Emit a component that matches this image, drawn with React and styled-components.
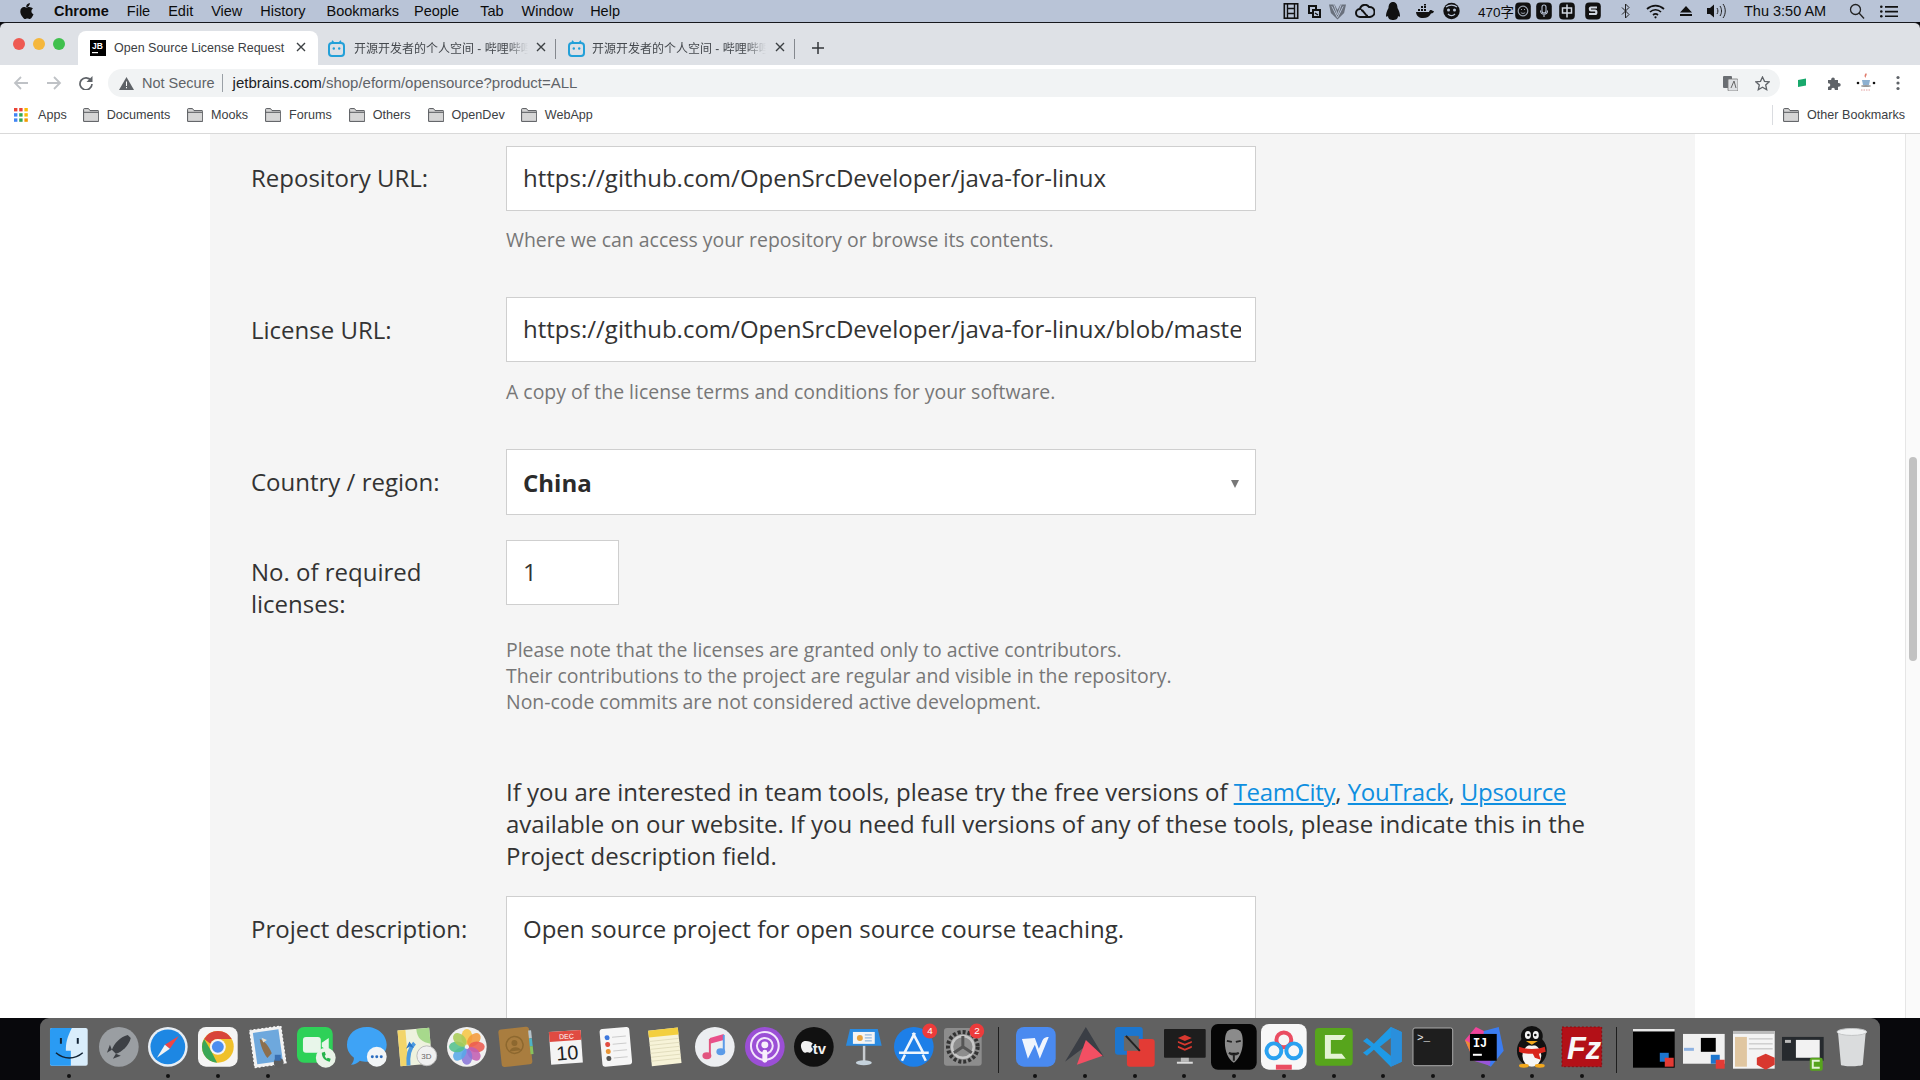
import styled, { createGlobalStyle } from "styled-components";

const GlobalStyle = createGlobalStyle`
  html, body {
    margin: 0;
    padding: 0;
    background: #08080c;
  }
  * {
    box-sizing: border-box;
  }
`;

const Screen = styled.div`
  width: 1920px;
  height: 1080px;
  display: flex;
  flex-direction: column;
  overflow: hidden;
  position: relative;
  background: #08080c;
`;

/* ---- macOS menu bar ---- */
const MenuBar = styled.div`
  height: 22px;
  flex: none;
  display: flex;
  align-items: center;
  background: #b9c4d7;
  color: #0c0c0c;
  font-family: "Liberation Sans", "Noto Sans CJK SC", Arial, sans-serif;
  font-size: 14.5px;
`;
const MenuItem = styled.span`
  flex: none;
  margin-left: ${(p) => p.$ml || 0}px;
  font-size: ${(p) => p.$size || 14.5}px;
  font-weight: ${(p) => (p.$bold ? 700 : 400)};
  white-space: nowrap;
`;
const Tray = styled.div`
  flex: none;
  height: 22px;
  width: ${(p) => p.$w}px;
  margin-left: ${(p) => p.$ml || 0}px;
  display: flex;
  align-items: center;
  justify-content: center;
`;

/* ---- browser chrome ---- */
const WindowTop = styled.div`
  flex: none;
  border-top: 1px solid #16181d;
  background: #dee1e6;
  border-radius: 6px 6px 0 0;
`;
const TabStrip = styled.div`
  height: 42px;
  display: flex;
  align-items: flex-end;
  padding-left: 9px;
  font-family: "Liberation Sans", "Noto Sans CJK SC", Arial, sans-serif;
  font-size: 12.5px;
`;
const Lights = styled.div`
  display: flex;
  gap: 8px;
  width: 69px;
  flex: none;
  align-self: center;
  margin-top: -1px;
  padding-left: 4px;
`;
const Light = styled.i`
  display: block;
  width: 12px;
  height: 12px;
  border-radius: 50%;
  background: ${(p) => p.$c};
`;
const Tab = styled.div`
  position: relative;
  height: 34px;
  width: ${(p) => p.$w}px;
  flex: none;
  display: flex;
  align-items: center;
  padding-left: ${(p) => p.$pl || 12}px;
  background: ${(p) => (p.$active ? "#fff" : "transparent")};
  border-radius: 8px 8px 0 0;
  color: ${(p) => (p.$active ? "#3c4043" : "#45494e")};
`;
const TabTitle = styled.span`
  margin-left: ${(p) => p.$ml || 8}px;
  width: ${(p) => p.$w}px;
  flex: none;
  white-space: nowrap;
  overflow: hidden;
  font-size: ${(p) => (p.$fade ? 12 : 12.5)}px;
  padding-bottom: ${(p) => (p.$fade ? 2 : 0)}px;
  -webkit-mask-image: ${(p) =>
    p.$fade ? "linear-gradient(to right, #000 88%, transparent)" : "none"};
`;
const TabClose = styled.span`
  position: absolute;
  right: ${(p) => p.$r}px;
  top: 11px;
  display: flex;
`;
const TabDivider = styled.span`
  position: absolute;
  right: 0;
  top: 8px;
  width: 1px;
  height: 20px;
  background: #84888e;
`;
const NewTab = styled.div`
  height: 34px;
  margin-left: 17px;
  display: flex;
  align-items: center;
`;

const Toolbar = styled.div`
  height: 36px;
  background: #fff;
  display: flex;
  align-items: center;
  font-family: "Liberation Sans", Arial, sans-serif;
  font-size: 14.5px;
`;
const NavButton = styled.div`
  width: ${(p) => p.$w}px;
  flex: none;
  display: flex;
  justify-content: center;
`;
const Omnibox = styled.div`
  width: 1672px;
  height: 28px;
  margin-left: 2px;
  flex: none;
  display: flex;
  align-items: center;
  border-radius: 14px;
  background: #f1f3f4;
  padding: 0 10px 0 11px;
`;
const NotSecure = styled.span`
  margin-left: 8px;
  color: #5f6368;
  white-space: nowrap;
`;
const UrlDivider = styled.span`
  width: 1px;
  height: 18px;
  background: #9aa0a6;
  margin: 0 10px 0 7px;
`;
const Url = styled.span`
  flex: 1;
  font-size: 15px;
  padding-bottom: 2px;
  color: #5f6368;
  white-space: nowrap;
  b {
    font-weight: 400;
    color: #202124;
  }
`;
const ActionButton = styled.span`
  display: flex;
  margin-left: ${(p) => p.$ml}px;
  flex: none;
`;

const BookmarkBar = styled.div`
  height: 33px;
  background: #fff;
  border-bottom: 1px solid #d9d9d9;
  display: flex;
  align-items: center;
  padding-left: 14px;
  padding-bottom: 5px;
  font-family: "Liberation Sans", Arial, sans-serif;
  font-size: 12.6px;
  color: #3c4043;
`;
const Bookmark = styled.span`
  display: flex;
  align-items: center;
  gap: ${(p) => p.$gap || 8}px;
  margin-right: ${(p) => p.$mr}px;
  white-space: nowrap;
`;
const BarRule = styled.span`
  width: 1px;
  height: 20px;
  margin: 0 10px 0 auto;
  background: #dadce0;
`;

/* ---- page ---- */
const Page = styled.div`
  flex: 1;
  min-height: 0;
  background: #fff;
  position: relative;
  overflow: hidden;
  padding-left: 210px;
`;
const ScrollTrack = styled.div`
  position: absolute;
  top: 0;
  bottom: 0;
  right: 0;
  width: 15px;
  background: #fafafa;
  border-left: 1px solid #e6e6e6;
`;
const ScrollThumb = styled.div`
  position: absolute;
  top: 323px;
  left: 3px;
  width: 8px;
  height: 204px;
  border-radius: 4px;
  background: #c2c2c2;
`;
const Panel = styled.div`
  width: 1485px;
  min-height: 100%;
  background: #f5f5f5;
  padding: 12px 0 0 41px;
  font-family: "Open Sans", sans-serif;
  color: #333;
`;
const Row = styled.div`
  display: flex;
  margin-top: ${(p) => p.$mt || 0}px;
  margin-bottom: ${(p) => p.$mb || 0}px;
`;
const Label = styled.div`
  width: 255px;
  flex: none;
  font-size: 24px;
  line-height: 32px;
  padding-top: ${(p) => p.$pt || 16}px;
  color: #333;
`;
const Field = styled.div`
  width: 750px;
`;
const TextInput = styled.input`
  display: block;
  width: ${(p) => p.$w || "100%"};
  height: 65px;
  padding: 0 14px 3px 16px;
  border: 1px solid #cfcfcf;
  border-radius: 0;
  background: #fff;
  outline: none;
  font-family: "Open Sans", sans-serif;
  font-size: 24px;
  color: #333;
`;
const Select = styled.div`
  height: 66px;
  display: flex;
  align-items: center;
  justify-content: space-between;
  padding: 0 16px;
  border: 1px solid #cfcfcf;
  background: #fff;
  font-size: 24px;
  font-weight: 700;
  color: #2b2b2b;
`;
const Caret = styled.span`
  width: 0;
  height: 0;
  margin-top: 4px;
  border-left: 4px solid transparent;
  border-right: 4px solid transparent;
  border-top: 8px solid #777;
`;
const Help = styled.div`
  margin-top: ${(p) => p.$mt}px;
  margin-left: ${(p) => p.$ml || 0}px;
  font-size: 19.45px;
  line-height: 26px;
  color: #777;
  white-space: nowrap;
`;
const Note = styled.p`
  margin: 61px 0 24px 255px;
  width: 1100px;
  font-size: 24px;
  line-height: 32px;
  color: #333;
  a {
    color: #0f8fe0;
    text-decoration: underline;
    letter-spacing: -0.3px;
  }
`;
const TextArea = styled.textarea`
  display: block;
  width: 750px;
  height: 200px;
  padding: 16px 16px;
  border: 1px solid #cfcfcf;
  background: #fff;
  outline: none;
  resize: none;
  font-family: "Open Sans", sans-serif;
  font-size: 24px;
  line-height: 32px;
  color: #333;
`;

/* ---- dock ---- */
const DockArea = styled.div`
  height: 62px;
  flex: none;
  background: #08080c;
  padding-left: 40px;
`;
const Dock = styled.div`
  width: 1840px;
  height: 62px;
  background: #616161;
  border-radius: 9px 9px 0 0;
  display: flex;
  align-items: flex-start;
  padding-left: 4px;
`;
const DockItem = styled.div`
  position: relative;
  width: 49.7px;
  height: 62px;
  flex: none;
  padding: ${(p) => (p.$big ? "6px 2px 0" : "8px 4px 0")};
  svg {
    display: block;
    width: 100%;
    overflow: visible;
  }
`;
const RunDot = styled.i`
  position: absolute;
  left: 50%;
  bottom: 2px;
  width: 4px;
  height: 4px;
  margin-left: -2px;
  border-radius: 50%;
  background: #111;
`;
const DockRule = styled.div`
  width: 1px;
  height: 46px;
  margin: 9px 12px 0 9.5px;
  flex: none;
  background: #1e1e1e;
`;

/* tray icons */
const Film = () => (
  <svg width="16" height="16" viewBox="0 0 15 16">
    <rect x=".8" y=".8" width="13.4" height="14.4" fill="#b9c4d7" stroke="#111" strokeWidth="1.6" />
    <path d="M4 1v14M11 1v14M4 5.500h7M4 10.500h7" stroke="#111" strokeWidth="1.4" />
  </svg>
);
const Screens = () => (
  <svg width="15" height="15" viewBox="0 0 15 15">
    <path d="M1 1h9v4h4v9H5v-4H1z" fill="#111" />
    <path d="M3 3h5v2H5v3H3zM7 7h5v5H7z" fill="#b9c4d7" />
    <path d="M8 9l3 2" stroke="#111" strokeWidth="1.4" />
  </svg>
);
const Vee = () => (
  <svg width="17" height="17" viewBox="0 0 18 17">
    <path d="M0 1h6l3 6 3-6h6l-2 9-7 7-7-7z" fill="#69707c" />
    <path d="M5 1l4 11 4-11M3 3l6 12 6-12" fill="none" stroke="#b9c4d7" strokeWidth="1" />
  </svg>
);
const Cloud = () => (
  <svg width="20" height="15" viewBox="0 0 20 15" fill="none" stroke="#111" strokeWidth="2">
    <path d="M5 13a4 4 0 0 1 0-8 5 5 0 0 1 9-2 5 5 0 0 1 1 10z" />
    <path d="M6 6c3 0 4 6 7 6" />
  </svg>
);
const Qq = ({ w = 14, h = 18 }) => (
  <svg width={w} height={h} viewBox="0 0 14 18">
    <path d="M7 0c3 0 4.500 2.600 4.500 6 1.500 3 2.500 5 2.500 8 0 1-1 1-2 0 0 2-1 3-2 3.500-2 .7-4 .7-6 0C3 17 2 16 2 14c-1 1-2 1-2 0 0-3 1-5 2.500-8C2.500 2.600 4 0 7 0z" fill="#111" />
  </svg>
);
const Whale = () => (
  <svg width="19" height="15" viewBox="0 0 19 15">
    <path d="M1 8h13c.5-2 2-2.500 3-1.500l2 .8c-.5 1.500-1.500 2.200-3 2.200-1.500 3-4 4.500-8 4.500-4 0-6.500-2-7-6z" fill="#111" />
    <path d="M3 5h2v2H3zM6 5h2v2H6zM9 5h2v2H9zM6 2h2v2H6zM9 2h2v2H9zM9 0h2v1.500H9z" fill="#111" />
  </svg>
);
const Mask = () => (
  <svg width="17" height="18" viewBox="0 0 17 18">
    <circle cx="8.500" cy="9" r="8.200" fill="#111" />
    <path d="M3 5c3-2.500 8-2.500 11 0" stroke="#b9c4d7" strokeWidth="1.300" fill="none" />
    <circle cx="5.500" cy="8" r="1.500" fill="#b9c4d7" />
    <circle cx="11.500" cy="8" r="1.500" fill="#b9c4d7" />
    <path d="M5 12c2 2 5 2 7 0" stroke="#b9c4d7" strokeWidth="1.300" fill="none" />
  </svg>
);
const BlackKey = ({ children }) => (
  <svg width="16" height="18" viewBox="0 0 16 18">
    <rect x=".2" y=".5" width="15.600" height="17" rx="4" fill="#111" />
    {children}
  </svg>
);
const SmileKey = () => (
  <BlackKey>
    <circle cx="8" cy="9" r="4.800" fill="none" stroke="#9aa3b0" strokeWidth="1.200" />
    <path d="M5.800 10.500c1.200 1.200 3.200 1.200 4.400 0M6 7.500h1M9 7.500h1" stroke="#9aa3b0" strokeWidth="1" fill="none" />
  </BlackKey>
);
const MicKey = () => (
  <BlackKey>
    <rect x="6" y="3" width="4" height="8" rx="2" fill="none" stroke="#b9c4d7" strokeWidth="1.100" />
    <path d="M4.500 8.500c0 5 7 5 7 0M8 13v2" stroke="#b9c4d7" strokeWidth="1.100" fill="none" />
  </BlackKey>
);
const HanKey = () => (
  <BlackKey>
    <path d="M3.500 6h9v5h-9zM8 2.500v13" fill="none" stroke="#d0d6e0" strokeWidth="1.500" />
  </BlackKey>
);
const SogouKey = () => (
  <BlackKey>
    <path d="M12 5.500H6c-1.500 0-1.500 3 0 3h4c1.800 0 1.800 3.500 0 3.500H4" fill="none" stroke="#d0d6e0" strokeWidth="2.200" />
  </BlackKey>
);
const Bluetooth = () => (
  <svg width="9" height="16" viewBox="0 0 9 16" fill="none" stroke="#222" strokeWidth="1">
    <path d="M1 4.500l7 7L4.500 15V1L8 4.500l-7 7" />
  </svg>
);
const Wifi = () => (
  <svg width="19" height="15" viewBox="0 0 19 15" fill="none" stroke="#111" strokeWidth="1.700">
    <path d="M1 5c5-4.500 12-4.500 17 0M4 8c3-3 8-3 11 0M7 11c1.500-1.300 3.500-1.300 5 0" />
    <circle cx="9.500" cy="13.300" r="1.100" fill="#111" stroke="none" />
  </svg>
);
const Eject = () => (
  <svg width="12" height="10" viewBox="0 0 12 10">
    <path d="M6 0l6 6.500H0zM0 8h12v2H0z" fill="#111" />
  </svg>
);
const Volume = () => (
  <svg width="21" height="16" viewBox="0 0 21 16" fill="none" stroke="#222" strokeWidth="1">
    <path d="M1 5h3l4-3.500v13L4 11H1z" fill="#111" stroke="none" />
    <path d="M11 5c1.200 2 1.200 4 0 6M14 3c2 3 2 7 0 10M17 1c3 4 3 10 0 14" />
  </svg>
);
const Search = () => (
  <svg width="16" height="16" viewBox="0 0 16 16" fill="none" stroke="#222" strokeWidth="1.300">
    <circle cx="6.500" cy="6.500" r="5" />
    <path d="M10 10l5 5.500" />
  </svg>
);
const ListIcon = () => (
  <svg width="18" height="13" viewBox="0 0 18 13" fill="#111">
    <path d="M5 1h13v1.700H5zM5 5.700h13v1.700H5zM5 10.400h13v1.700H5z" />
    <circle cx="1.300" cy="1.800" r="1.300" />
    <circle cx="1.300" cy="6.500" r="1.300" />
    <circle cx="1.300" cy="11.200" r="1.300" />
  </svg>
);
const Apple = () => (
  <svg width="14" height="16" viewBox="0 0 14 16" fill="#111">
    <path d="M9.800 0c.1 1.200-.3 2.200-1 3-.7.800-1.700 1.300-2.600 1.200-.1-1.100.4-2.200 1-2.900C7.900.6 9 .1 9.800 0zM13 5.500c-1 .7-1.600 1.600-1.600 2.800 0 1.400.8 2.400 2.100 3-.4 1.100-.9 2.100-1.600 3-.6.900-1.300 1.700-2.200 1.700-.9 0-1.200-.5-2.300-.5s-1.500.5-2.300.5c-.9 0-1.600-.9-2.300-1.800C1 12.300.3 10.400.3 8.600c0-2.900 1.900-4.500 3.700-4.500 1 0 1.800.6 2.400.6.600 0 1.500-.7 2.700-.7 1.700 0 3.100.9 3.900 1.500z" />
  </svg>
);

/* browser icons */
const JbFavicon = () => (
  <svg width="16" height="16" viewBox="0 0 16 16" style={{ flex: "none" }}>
    <rect width="16" height="16" fill="#000" />
    <text x="2" y="9" fill="#fff" fontSize="8.500" fontWeight="700" fontFamily="Liberation Sans">JB</text>
    <rect x="2" y="12" width="6" height="1.200" fill="#fff" />
  </svg>
);
const BiliFavicon = () => (
  <svg width="17" height="17" viewBox="0 0 17 17" style={{ flex: "none" }}>
    <path d="M4 .8l2.200 2.500M13 .8l-2.200 2.500" stroke="#23a0d8" strokeWidth="1.500" />
    <rect x="1" y="3" width="15" height="13" rx="3" fill="none" stroke="#23a0d8" strokeWidth="2" />
    <circle cx="5.800" cy="8.500" r="1.200" fill="#23a0d8" />
    <circle cx="11.200" cy="8.500" r="1.200" fill="#23a0d8" />
  </svg>
);
const CloseX = () => (
  <svg width="10" height="10" viewBox="0 0 10 10" stroke="#3c4043" strokeWidth="1.400">
    <path d="M1 1l8 8M9 1l-8 8" />
  </svg>
);
const Plus = () => (
  <svg width="12" height="12" viewBox="0 0 12 12" stroke="#33363a" strokeWidth="1.500">
    <path d="M6 0v12M0 6h12" />
  </svg>
);
const ArrowIcon = ({ dir }) => (
  <svg width="16" height="14" viewBox="0 0 16 14" fill="none" stroke="#bfc2c6" strokeWidth="1.800">
    <path d={dir === "left" ? "M15 7H2M8 1L2 7l6 6" : "M1 7h13M8 1l6 6-6 6"} />
  </svg>
);
const Reload = () => (
  <svg width="14" height="14" viewBox="0 0 14 14" fill="none">
    <path d="M12 4.500A6 6 0 1 0 13 8" stroke="#5f6368" strokeWidth="1.700" />
    <path d="M13.500 0v6h-6z" fill="#5f6368" />
  </svg>
);
const Warn = () => (
  <svg width="15" height="13" viewBox="0 0 15 13" style={{ flex: "none" }}>
    <path d="M7.500 0L15 13H0z" fill="#5f6368" />
    <path d="M7 4.500h1v4.500H7zM7 10h1v1.300H7z" fill="#fff" />
  </svg>
);
const Translate = () => (
  <svg width="15" height="15" viewBox="0 0 15 15">
    <rect x="0" y="0" width="9" height="12" rx="1" fill="#6a6e73" />
    <rect x="5" y="3" width="10" height="12" rx="1" fill="#dfe1e4" stroke="#777" strokeWidth=".8" />
    <path d="M8 12l3-7 2 7" stroke="#666" fill="none" />
  </svg>
);
const Star = () => (
  <svg width="15" height="15" viewBox="0 0 15 15" fill="none" stroke="#5f6368" strokeWidth="1.300">
    <path d="M7.500 1l2 4.300 4.700.5-3.500 3.200 1 4.700-4.200-2.400L3.300 13.700l1-4.700L.8 5.800l4.700-.5z" />
  </svg>
);
const GreenTag = () => (
  <svg width="10" height="10" viewBox="0 0 10 10">
    <path d="M1 2l8-1.500v7L1 9z" fill="#18a96c" />
  </svg>
);
const Puzzle = () => (
  <svg width="15" height="15" viewBox="0 0 15 15" fill="#5f6368">
    <path d="M1 4h3.200c-.6-3 4-3.500 3.600 0H11v3c3.600-.5 3.600 4.200 0 3.700V14H7.800c.4-3-3.800-3-3.400 0H1v-3.300c3 .5 3-4 0-3.400z" />
  </svg>
);
const Avatar = () => (
  <svg width="22" height="22" viewBox="0 0 22 22">
    <path d="M11 1c2 2-1 3 0 5-2-1-2-3 0-5z" fill="#e07a6a" />
    <path d="M7 8h8l-1 5H8z" fill="#8db0d0" />
    <ellipse cx="11" cy="14" rx="5" ry="1" fill="#999" />
    <circle cx="3" cy="11" r="1.300" fill="#111" />
    <circle cx="19" cy="11" r="1.300" fill="#111" />
    <path d="M6 18h10" stroke="#e2a0a0" strokeWidth="1" strokeDasharray="1.500 1" />
  </svg>
);
const Dots = () => (
  <svg width="4" height="16" viewBox="0 0 4 16" fill="#5f6368">
    <circle cx="2" cy="2.500" r="1.600" />
    <circle cx="2" cy="8" r="1.600" />
    <circle cx="2" cy="13.500" r="1.600" />
  </svg>
);
const AppsGrid = () => (
  <svg width="14" height="14" viewBox="0 0 14 14">
    {["#ea4335", "#ea4335", "#fbbc04", "#4285f4", "#34a853", "#fbbc04", "#4285f4", "#34a853", "#f29900"].map((c, i) => (
      <rect key={i} x={(i % 3) * 5.2} y={Math.floor(i / 3) * 5.2} width="3.4" height="3.4" fill={c} />
    ))}
  </svg>
);
const Folder = () => (
  <svg width="16" height="14" viewBox="0 0 16 14" style={{ flex: "none" }}>
    <path d="M.6 13.400V1.300c0-.4.300-.7.700-.7h4.200l1.500 2h8c.4 0 .7.300.7.700v10.100z" fill="#d6d6d6" stroke="#55585c" strokeWidth="1" />
    <path d="M.6 4.300h14.800" stroke="#55585c" strokeWidth="1" />
  </svg>
);

/* dock icons, all in a 42 x 42 box */
const dockIcons = {
  finder: (
    <>
      <rect x="2" y="2" width="38" height="38" rx="2" fill="#d9edfb" />
      <path d="M2 4a2 2 0 0 1 2-2h20c-5 10-6 15-6 23h5v15H4a2 2 0 0 1-2-2z" fill="#2a9bf3" />
      <path d="M13 12v6M30 12v6" stroke="#123" strokeWidth="2" />
      <path d="M8 27c8 7 19 7 27 0" stroke="#123" strokeWidth="1.500" fill="none" />
    </>
  ),
  launchpad: (
    <>
      <circle cx="21" cy="21" r="20" fill="#9a9ea2" />
      <path d="M30 9c-8 2-14 9-16 15l4 4c6-2 13-8 15-16z" fill="#3d4045" />
      <path d="M14 24l-5 3 3-8zM18 28l-3 5 8-3zM12 30l-3 3" fill="#3d4045" />
    </>
  ),
  safari: (
    <>
      <circle cx="21" cy="21" r="20" fill="#e8eef4" />
      <circle cx="21" cy="21" r="17.500" fill="#1d87e3" />
      <path d="M32 10L18 19l5 4z" fill="#ef4545" />
      <path d="M10 32l8-13 5 4z" fill="#f3f3f3" />
    </>
  ),
  chrome: (
    <>
      <rect x="1" y="1" width="40" height="40" rx="8" fill="#f5f5f5" />
      <circle cx="21" cy="21" r="16" fill="#f0c12c" />
      <path d="M21 5a16 16 0 0 1 14 8H21a8 8 0 0 0-7.500 5L7.200 13A16 16 0 0 1 21 5z" fill="#d8453b" />
      <path d="M7.200 13l7 12 6 12A16 16 0 0 1 7.200 13z" fill="#3aa757" />
      <circle cx="21" cy="21" r="8" fill="#f5f5f5" />
      <circle cx="21" cy="21" r="6" fill="#4c8ef0" />
    </>
  ),
  mail: (
    <>
      <g transform="rotate(-8 21 21)">
        <rect x="5" y="2" width="32" height="38" fill="#f2f2f2" strokeDasharray="2 2" stroke="#fff" />
        <rect x="8" y="5" width="26" height="32" fill="#6ea8dd" />
        <path d="M14 12c4 2 8 8 10 16l-5 4c-3-5-5-12-5-20z" fill="#8c6f4d" />
        <path d="M16 11l5 3-4 2z" fill="#e9dfcc" />
      </g>
      <circle cx="32" cy="37" r="5" fill="#5e5e5e" />
      <rect x="28" y="29" width="6" height="6" fill="#3a6fb0" />
    </>
  ),
  facetime: (
    <>
      <rect x="1" y="1" width="36" height="36" rx="7" fill="#2ed158" />
      <rect x="7" y="11" width="18" height="16" rx="3" fill="#e8f6ea" />
      <path d="M26 17l7-5v14l-7-5z" fill="#e8f6ea" />
      <circle cx="30" cy="32" r="10" fill="#e9f3e8" />
      <path d="M26 27c0 5 3 8 8 9l1-3-3-1-1 1c-1-1-2-2-2-3l1-1-1-3z" fill="#25b34b" />
    </>
  ),
  messages: (
    <>
      <path d="M21 1C10 1 1 8 1 19c0 6 3 10 7 13 0 3-1 5-3 7 4 0 7-2 9-4 2 1 5 1 7 1 11 0 20-7 20-17S32 1 21 1z" fill="#3ea3f6" />
      <circle cx="31" cy="31" r="10" fill="#f2f5f7" />
      <circle cx="26.500" cy="31" r="1.500" fill="#2a6cc0" />
      <circle cx="31" cy="31" r="1.500" fill="#2a6cc0" />
      <circle cx="35.500" cy="31" r="1.500" fill="#2a6cc0" />
    </>
  ),
  maps: (
    <>
      <g transform="rotate(-5 21 21)">
        <rect x="3" y="3" width="32" height="36" fill="#eef2de" />
        <path d="M3 3h8v36H3z" fill="#f2d56a" />
        <path d="M22 3c0 10 5 14 13 16V3z" fill="#a7d98c" />
        <path d="M11 39c0-12 3-18 8-22" stroke="#4a9ae0" strokeWidth="4" fill="none" />
        <path d="M10 22l4-7 4 7-4-2z" fill="#2a76c8" />
      </g>
      <circle cx="31" cy="30" r="10" fill="#f0f0f0" stroke="#bbb" />
      <text x="25.500" y="33" fontSize="8" fontFamily="Liberation Sans" fill="#666">3D</text>
    </>
  ),
  photos: (
    <>
      <circle cx="21" cy="21" r="20" fill="#f0f0f0" />
      {["#f6c644", "#f29a3b", "#ec5b50", "#c25fb2", "#8a76d8", "#58a8e8", "#53c08c", "#a8cc57"].map((c, i) => (
        <ellipse key={c} cx="21" cy="11" rx="5.500" ry="8" fill={c} opacity=".88" transform={`rotate(${i * 45} 21 21)`} />
      ))}
    </>
  ),
  contacts: (
    <>
      <g transform="rotate(-6 21 21)">
        <rect x="5" y="2" width="31" height="38" rx="3" fill="#a97d3f" />
        <rect x="35" y="6" width="3" height="8" fill="#b7c4cb" />
        <rect x="35" y="14" width="3" height="8" fill="#4eb2c7" />
        <rect x="35" y="22" width="3" height="8" fill="#87c25c" />
        <circle cx="20" cy="19" r="8.500" fill="none" stroke="#8d682f" strokeWidth="1.500" />
        <circle cx="20" cy="17" r="3" fill="#8d682f" />
        <path d="M14 25c2-5 10-5 12 0z" fill="#8d682f" />
      </g>
    </>
  ),
  calendar: (
    <>
      <g transform="rotate(-4 21 21)">
        <rect x="5" y="5" width="32" height="33" fill="#f4f4f4" />
        <rect x="5" y="5" width="32" height="10" fill="#e04b42" />
        <text x="15" y="13" fontSize="7" fill="#fff" fontFamily="Liberation Sans">DEC</text>
        <text x="11" y="34" fontSize="20" fill="#222" fontFamily="Liberation Sans">10</text>
      </g>
    </>
  ),
  reminders: (
    <>
      <g transform="rotate(-5 21 21)">
        <rect x="6" y="2" width="30" height="38" rx="3" fill="#f6f6f6" />
        <circle cx="13" cy="11" r="2.500" fill="#3d78dd" />
        <circle cx="13" cy="18" r="2.500" fill="#e24d42" />
        <circle cx="13" cy="25" r="2.500" fill="#ea9635" />
        <circle cx="13" cy="32" r="2.500" fill="#555" />
        <path d="M18 11h14M18 18h14M18 25h14M18 32h14" stroke="#ccc" />
      </g>
    </>
  ),
  notes: (
    <>
      <g transform="rotate(-6 21 21)">
        <rect x="6" y="3" width="30" height="36" fill="#f7f3d8" />
        <rect x="6" y="3" width="30" height="7" fill="#f3cf3e" />
        <path d="M6 14h30M6 18h30M6 22h30M6 26h30M6 30h30M6 34h30" stroke="#ddd8b8" strokeWidth=".8" />
      </g>
    </>
  ),
  music: (
    <>
      <circle cx="21" cy="21" r="20" fill="#eceef1" />
      <path d="M16 12l14-4v6l-14 4z" fill="#e94f8a" />
      <path d="M16 13v17" stroke="#e2557f" strokeWidth="2" />
      <path d="M30 9v16" stroke="#5b9be8" strokeWidth="2" />
      <ellipse cx="13" cy="30" rx="4.500" ry="3.500" fill="#e2557f" />
      <ellipse cx="27" cy="26" rx="4.500" ry="3.500" fill="#5b9be8" />
    </>
  ),
  podcasts: (
    <>
      <circle cx="21" cy="21" r="20" fill="#9b4fd6" />
      <circle cx="21" cy="20" r="14" fill="none" stroke="#f3e6fb" strokeWidth="2" />
      <circle cx="21" cy="20" r="8" fill="none" stroke="#f3e6fb" strokeWidth="2" />
      <circle cx="21" cy="19" r="3.500" fill="#f8f0fc" />
      <rect x="18.500" y="24" width="5" height="13" rx="2.500" fill="#f8f0fc" />
    </>
  ),
  tv: (
    <>
      <circle cx="21" cy="21" r="20" fill="#111" />
      <path d="M13 15c-3 0-5 2-5 5s2 7 4 7c1 0 1.500-.5 2.500-.5S16 27 17 27c1.500 0 3-3 3-4-2-1-2-4 0-5-1-2-4-3-7-3z" fill="#f1f1f1" />
      <text x="20" y="28" fontSize="15" fontWeight="700" fill="#f1f1f1" fontFamily="Liberation Sans">tv</text>
    </>
  ),
  keynote: (
    <>
      <path d="M7 3h28l4 17H3z" fill="#2a8ae0" />
      <rect x="10" y="6" width="22" height="12" fill="#f4f4f4" />
      <circle cx="17" cy="12" r="3" fill="#e8a23c" />
      <path d="M22 9h7M22 12h7M22 15h7" stroke="#7aa8d8" />
      <rect x="20" y="20" width="2.500" height="16" fill="#c8ccd0" />
      <ellipse cx="21" cy="37" rx="8" ry="2.500" fill="#c5d2dc" />
    </>
  ),
  appstore: (
    <>
      <circle cx="21" cy="21" r="20" fill="#1d7fe8" />
      <path d="M22 7L11 28M20 7l11 21M6 27h30M9 35l3-6M33 35l-3-6" stroke="#eef5fc" strokeWidth="2.600" fill="none" />
      <circle cx="37" cy="5" r="7.500" fill="#ed3b3b" />
      <text x="34.500" y="8.500" fontSize="10" fill="#fff" fontFamily="Liberation Sans">4</text>
    </>
  ),
  settings: (
    <>
      <rect x="2" y="2" width="38" height="38" rx="3" fill="#8d8d8d" />
      <circle cx="21" cy="21" r="15" fill="none" stroke="#333" strokeWidth="4" strokeDasharray="3 2" />
      <circle cx="21" cy="21" r="11" fill="none" stroke="#c8c8c8" strokeWidth="2.500" />
      <path d="M21 21V10M21 21l-9 6M21 21l9 6" stroke="#555" strokeWidth="3" />
      <circle cx="35" cy="5" r="7.500" fill="#ed3b3b" />
      <text x="32.500" y="8.500" fontSize="10" fill="#fff" fontFamily="Liberation Sans">2</text>
    </>
  ),
  wps: (
    <>
      <rect x="1" y="1" width="40" height="40" rx="8" fill="#4a8af0" />
      <path d="M7 13l6 20 7-14 5 14 9-22c-4 0-6 2-7 5l-3 7-4-11z" fill="#f0f5fd" />
    </>
  ),
  artifact: (
    <>
      <path d="M22 1l18 30-19-10L1 36z" fill="#3a3e45" />
      <path d="M22 14l17 16-26 9z" fill="#f34f63" />
    </>
  ),
  vmware: (
    <>
      <rect x="1" y="1" width="28" height="28" rx="3" fill="#1c76cf" />
      <rect x="13" y="13" width="28" height="28" rx="3" fill="#e33b35" />
      <rect x="10" y="10" width="15" height="15" fill="#686868" />
      <path d="M12 10l14 15" stroke="#222" strokeWidth="2" />
    </>
  ),
  redis: (
    <>
      <rect x="0" y="3" width="42" height="29" rx="1" fill="#1d1d1d" />
      <rect x="17" y="32" width="8" height="4" fill="#b9b9b9" />
      <rect x="13" y="36" width="16" height="2" fill="#ddd" />
      <path d="M21 9l7 3-7 3-7-3zM14 15l7 3 7-3v2l-7 3-7-3zM14 20l7 3 7-3v2l-7 3-7-3z" fill="#d8382f" />
    </>
  ),
  anon: (
    <>
      <rect x="0" y="0" width="46" height="46" rx="7" fill="#050505" />
      <path d="M23 5c-8 0-9 6-9 14 0 8 3 17 9 20 5-3 9-12 9-20 0-8-1-14-9-14z" fill="#8b8b8b" />
      <path d="M16 17l5 1M25 18l5-1M18 29c3 2 7 2 10 0M23 31v6" stroke="#222" strokeWidth="2" />
    </>
  ),
  baidu: (
    <>
      <rect x="0" y="0" width="46" height="46" rx="8" fill="#f7f7f7" />
      <circle cx="23" cy="16" r="7.500" fill="none" stroke="#ea4d62" strokeWidth="4" />
      <circle cx="13" cy="27" r="7.500" fill="none" stroke="#2aa1f0" strokeWidth="4" />
      <circle cx="33" cy="27" r="7.500" fill="none" stroke="#2aa1f0" strokeWidth="4" />
      <rect x="15" y="41" width="16" height="5" fill="#ea4d62" />
    </>
  ),
  camtasia: (
    <>
      <rect x="2" y="2" width="38" height="38" rx="4" fill="#57a51c" />
      <path d="M33 9H12v24h21l-4-5H18V14h11z" fill="#e4f3d4" />
    </>
  ),
  vscode: (
    <>
      <path d="M29 1l11 5v30l-11 5L12 24l-7 6-4-3 8-6-8-6 4-3 7 6z" fill="#1e9ae6" />
      <path d="M29 1l11 5v30l-11 5z" fill="#2a8fdc" />
      <path d="M29 12L18 21l11 9z" fill="#61656a" />
    </>
  ),
  terminal: (
    <>
      <rect x="1" y="2" width="40" height="38" rx="2" fill="#1e1e1e" stroke="#aaa" />
      <text x="5" y="15" fontSize="11" fill="#eee" fontFamily="Liberation Mono">&gt;_</text>
    </>
  ),
  idea: (
    <>
      <path d="M3 14L14 1l12 6-3 30-11-2z" fill="#f0449a" />
      <path d="M22 5L37 1l5 24-13 16-10-6z" fill="#3b7cf0" />
      <path d="M3 14l9 21 6-12z" fill="#ef8c36" />
      <path d="M12 35l16 5 3-18z" fill="#9a56d8" />
      <rect x="8" y="8" width="27" height="27" fill="#000" />
      <text x="11" y="21" fontSize="12" fontWeight="700" fill="#fff" fontFamily="Liberation Mono">IJ</text>
      <rect x="11" y="28" width="9" height="2" fill="#fff" />
    </>
  ),
  qq: (
    <>
      <ellipse cx="21" cy="25" rx="15" ry="16" fill="#111" />
      <ellipse cx="21" cy="30" rx="9.500" ry="11" fill="#f5f5f5" />
      <ellipse cx="21" cy="10" rx="11" ry="10" fill="#111" />
      <ellipse cx="17" cy="9" rx="3" ry="4" fill="#f5f5f5" />
      <ellipse cx="25" cy="9" rx="3" ry="4" fill="#f5f5f5" />
      <circle cx="17.500" cy="9" r="1.300" fill="#111" />
      <circle cx="24.500" cy="9" r="1.300" fill="#111" />
      <path d="M15 15h12l-6 4z" fill="#f2a81d" />
      <path d="M8 21c8 3 18 3 26 0l1 5-7 2 2 6-6-2-2-4c-5 0-10 0-14-2z" fill="#d9261c" />
      <ellipse cx="13" cy="40" rx="5" ry="2" fill="#f2a81d" />
      <ellipse cx="29" cy="40" rx="5" ry="2" fill="#f2a81d" />
    </>
  ),
  filezilla: (
    <>
      <rect x="1" y="1" width="40" height="40" fill="#b31017" strokeDasharray="2 2" stroke="#8a0c10" />
      <text x="6" y="33" fontSize="31" fontWeight="700" fontStyle="italic" fill="#f7f7f7" fontFamily="Liberation Sans">Fz</text>
    </>
  ),
  win1: (
    <>
      <rect x="0" y="3" width="42" height="39" fill="#000" />
      <rect x="0" y="3" width="42" height="2.500" fill="#e8e8e8" />
      <rect x="27" y="27" width="9" height="9" fill="#1c76cf" />
      <rect x="32" y="32" width="9" height="9" fill="#e33b35" />
    </>
  ),
  win2: (
    <>
      <rect x="0" y="8" width="42" height="30" fill="#f1f1f1" />
      <rect x="18" y="12" width="15" height="14" fill="#000" />
      <rect x="1" y="22" width="10" height="3" fill="#8eb2e2" />
      <rect x="28" y="29" width="9" height="9" fill="#1c76cf" />
      <rect x="33" y="34" width="9" height="9" fill="#e33b35" />
    </>
  ),
  win3: (
    <>
      <rect x="0" y="5" width="42" height="38" fill="#f4f4f4" />
      <rect x="0" y="5" width="42" height="3" fill="#bbb" />
      <rect x="2" y="11" width="12" height="30" fill="#e0c6a0" />
      <path d="M16 13h24M16 18h24M16 23h24" stroke="#bbb" />
      <path d="M33 28l9 4v7l-9 5-9-5v-7z" fill="#d8382f" />
    </>
  ),
  win4: (
    <>
      <rect x="0" y="11" width="42" height="24" fill="#262a2e" />
      <rect x="14" y="14" width="24" height="18" fill="#f2f2f2" />
      <rect x="3" y="14" width="6" height="3" fill="#bbb" />
      <rect x="28" y="32" width="13" height="13" rx="2" fill="#57a51c" />
      <path d="M38 35h-7v7h7" stroke="#e4f3d4" strokeWidth="2" fill="none" />
    </>
  ),
  trash: (
    <>
      <path d="M6 6l3 33c0 2 20 2 22 0l3-33z" fill="#dadcdd" />
      <ellipse cx="20" cy="6" rx="15" ry="3.500" fill="#eef0f1" stroke="#c2c4c5" />
    </>
  ),
};

const DockIcon = ({ name, run, big }) => (
  <DockItem $big={big}>
    <svg viewBox={big ? "0 0 46 46" : "0 0 42 42"}>{dockIcons[name]}</svg>
    {run && <RunDot />}
  </DockItem>
);

const Apps = [
  ["finder", 1], ["launchpad"], ["safari", 1], ["chrome", 1], ["mail", 1], ["facetime"], ["messages"],
  ["maps"], ["photos"], ["contacts"], ["calendar"], ["reminders"], ["notes"], ["music"], ["podcasts"],
  ["tv"], ["keynote"], ["appstore"], ["settings"],
];
const OpenApps = [
  ["wps", 1], ["artifact", 1], ["vmware", 1], ["redis", 1], ["anon", 1, 1], ["baidu", 1, 1], ["camtasia", 1],
  ["vscode", 1], ["terminal", 1], ["idea", 1], ["qq", 1], ["filezilla", 1],
];
const Minimized = ["win1", "win2", "win3", "win4", "trash"];

const App = () => {
  return (
    <Screen>
      <GlobalStyle />
      <MenuBar>
        <Tray $w={14} $ml={20}><Apple /></Tray>
        <MenuItem $ml={20} $bold>Chrome</MenuItem>
        <MenuItem $ml={18}>File</MenuItem>
        <MenuItem $ml={18}>Edit</MenuItem>
        <MenuItem $ml={18}>View</MenuItem>
        <MenuItem $ml={18}>History</MenuItem>
        <MenuItem $ml={21}>Bookmarks</MenuItem>
        <MenuItem $ml={15}>People</MenuItem>
        <MenuItem $ml={21}>Tab</MenuItem>
        <MenuItem $ml={18}>Window</MenuItem>
        <MenuItem $ml={17}>Help</MenuItem>
        <Tray $w={16} $ml={663}><Film /></Tray>
        <Tray $w={16} $ml={8}><Screens /></Tray>
        <Tray $w={18} $ml={6}><Vee /></Tray>
        <Tray $w={20} $ml={8}><Cloud /></Tray>
        <Tray $w={14} $ml={11}><Qq /></Tray>
        <Tray $w={19} $ml={15.5}><Whale /></Tray>
        <Tray $w={17} $ml={9}><Mask /></Tray>
        <MenuItem $ml={17.5} $size={13.5}>470字</MenuItem>
        <Tray $w={16} $ml={1}><SmileKey /></Tray>
        <Tray $w={16} $ml={5.5}><MicKey /></Tray>
        <Tray $w={16} $ml={6.5}><HanKey /></Tray>
        <Tray $w={16} $ml={10}><SogouKey /></Tray>
        <Tray $w={9} $ml={20.5}><Bluetooth /></Tray>
        <Tray $w={19} $ml={16}><Wifi /></Tray>
        <Tray $w={12} $ml={14.5}><Eject /></Tray>
        <Tray $w={21} $ml={14.5}><Volume /></Tray>
        <MenuItem $ml={16.5}>Thu 3:50 AM</MenuItem>
        <Tray $w={16} $ml={23}><Search /></Tray>
        <Tray $w={18} $ml={15}><ListIcon /></Tray>
      </MenuBar>

      <WindowTop>
        <TabStrip>
          <Lights>
            <Light $c="#ee5a52" />
            <Light $c="#f5b73c" />
            <Light $c="#3fc04d" />
          </Lights>
          <Tab $active $w={240}>
            <JbFavicon />
            <TabTitle $w={175}>Open Source License Request</TabTitle>
            <TabClose $r={12}><CloseX /></TabClose>
          </Tab>
          <Tab $w={238} $pl={10}>
            <BiliFavicon />
            <TabTitle $w={174} $ml={9} $fade>开源开发者的个人空间 - 哔哩哔哩</TabTitle>
            <TabClose $r={10}><CloseX /></TabClose>
            <TabDivider />
          </Tab>
          <Tab $w={239}>
            <BiliFavicon />
            <TabTitle $w={174} $ml={7} $fade>开源开发者的个人空间 - 哔哩哔哩</TabTitle>
            <TabClose $r={10}><CloseX /></TabClose>
            <TabDivider />
          </Tab>
          <NewTab><Plus /></NewTab>
        </TabStrip>
        <Toolbar>
          <NavButton $w={42}><ArrowIcon dir="left" /></NavButton>
          <NavButton $w={24}><ArrowIcon dir="right" /></NavButton>
          <NavButton $w={40}><Reload /></NavButton>
          <Omnibox>
            <Warn />
            <NotSecure>Not Secure</NotSecure>
            <UrlDivider />
            <Url><b>jetbrains.com</b>/shop/eform/opensource?product=ALL</Url>
            <ActionButton $ml={0}><Translate /></ActionButton>
            <ActionButton $ml={17.5}><Star /></ActionButton>
          </Omnibox>
          <ActionButton $ml={17}><GreenTag /></ActionButton>
          <ActionButton $ml={19.5}><Puzzle /></ActionButton>
          <ActionButton $ml={13.5}><Avatar /></ActionButton>
          <ActionButton $ml={19}><Dots /></ActionButton>
        </Toolbar>
        <BookmarkBar>
          <Bookmark $mr={16} $gap={10}><AppsGrid />Apps</Bookmark>
          <Bookmark $mr={16.5}><Folder />Documents</Bookmark>
          <Bookmark $mr={17}><Folder />Mooks</Bookmark>
          <Bookmark $mr={17}><Folder />Forums</Bookmark>
          <Bookmark $mr={17}><Folder />Others</Bookmark>
          <Bookmark $mr={16}><Folder />OpenDev</Bookmark>
          <Bookmark $mr={0}><Folder />WebApp</Bookmark>
          <BarRule />
          <Bookmark $mr={15}><Folder />Other Bookmarks</Bookmark>
        </BookmarkBar>
      </WindowTop>

      <Page>
        <Panel>
          <Row>
            <Label>Repository URL:</Label>
            <Field>
              <TextInput readOnly defaultValue="https://github.com/OpenSrcDeveloper/java-for-linux" />
              <Help $mt={16}>Where we can access your repository or browse its contents.</Help>
            </Field>
          </Row>
          <Row $mt={44}>
            <Label $pt={17}>License URL:</Label>
            <Field>
              <TextInput readOnly defaultValue="https://github.com/OpenSrcDeveloper/java-for-linux/blob/master/LICENSE" />
              <Help $mt={17}>A copy of the license terms and conditions for your software.</Help>
            </Field>
          </Row>
          <Row $mt={44} $mb={25}>
            <Label $pt={17}>Country / region:</Label>
            <Field>
              <Select>China<Caret /></Select>
            </Field>
          </Row>
          <Row>
            <Label>No. of required licenses:</Label>
            <Field>
              <TextInput $w="113px" readOnly defaultValue="1" />
            </Field>
          </Row>
          <Help $mt={17} $ml={255}>
            Please note that the licenses are granted only to active contributors.
            <br />
            Their contributions to the project are regular and visible in the repository.
            <br />
            Non-code commits are not considered active development.
          </Help>
          <Note>
            If you are interested in team tools, please try the free versions of{" "}
            <a href="#teamcity">TeamCity</a>, <a href="#youtrack">YouTrack</a>, <a href="#upsource">Upsource</a>{" "}
            available on our website. If you need full versions of any of these tools, please indicate this in the
            Project description field.
          </Note>
          <Row>
            <Label $pt={17}>Project description:</Label>
            <TextArea readOnly defaultValue="Open source project for open source course teaching." />
          </Row>
        </Panel>
        <ScrollTrack>
          <ScrollThumb />
        </ScrollTrack>
      </Page>

      <DockArea>
        <Dock>
          {Apps.map(([name, run]) => (
            <DockIcon key={name} name={name} run={run} />
          ))}
          <DockRule />
          {OpenApps.map(([name, run, big]) => (
            <DockIcon key={name} name={name} run={run} big={big} />
          ))}
          <DockRule />
          {Minimized.map((name) => (
            <DockIcon key={name} name={name} />
          ))}
        </Dock>
      </DockArea>
    </Screen>
  );
};

export default App;
